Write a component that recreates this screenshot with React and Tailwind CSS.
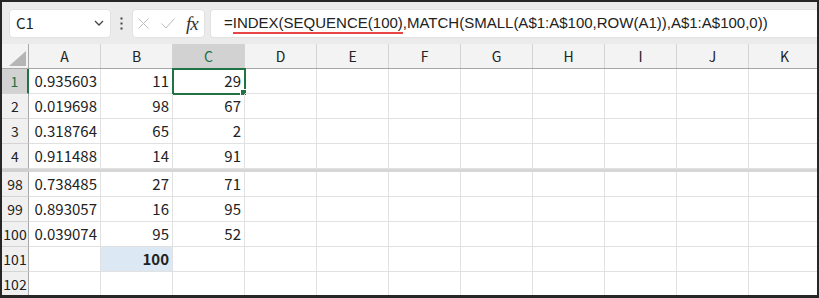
import React from 'react';

const COLS = ['A', 'B', 'C', 'D', 'E', 'F', 'G', 'H', 'I', 'J', 'K'];

const TOP_ROWS = [
  { n: 1, cells: ['0.935603', '11', '29'] },
  { n: 2, cells: ['0.019698', '98', '67'] },
  { n: 3, cells: ['0.318764', '65', '2'] },
  { n: 4, cells: ['0.911488', '14', '91'] },
];

const BOTTOM_ROWS = [
  { n: 98, cells: ['0.738485', '27', '71'] },
  { n: 99, cells: ['0.893057', '16', '95'] },
  { n: 100, cells: ['0.039074', '95', '52'] },
  { n: 101, cells: ['', '100', ''] },
  { n: 102, cells: ['', '', ''] },
];

const font = "font-['Noto_Sans_CJK_JP','Noto_Sans',sans-serif]";

const Toolbar = () => (
  <div className="flex items-center h-[42px] bg-[#ebebeb] pl-[7px] shrink-0">
    <div className="flex items-center justify-between w-[102px] h-[29px] bg-white rounded-[4px] border border-[#e2e2e2] pl-[6px] pr-[6px]">
      <span className="text-[15px] text-[#222]">C1</span>
      <svg width="10" height="6" viewBox="0 0 10 6">
        <path d="M1 1 L5 5 L9 1" fill="none" stroke="#444" strokeWidth="1.3" />
      </svg>
    </div>
    <div className="w-[21px] flex justify-center">
      <svg width="3" height="13" viewBox="0 0 3 13">
        <rect x="0.5" y="0.5" width="2" height="2" fill="#444" />
        <rect x="0.5" y="5.5" width="2" height="2" fill="#444" />
        <rect x="0.5" y="10.5" width="2" height="2" fill="#444" />
      </svg>
    </div>
    <div className="flex items-center w-[73px] h-[29px] bg-white rounded-[4px] border border-[#e2e2e2] pl-[5px]">
      <svg width="11" height="11" viewBox="0 0 11 11">
        <path d="M0.5 0.5 L10.5 10.5 M10.5 0.5 L0.5 10.5" stroke="#bdbdbd" strokeWidth="1" fill="none" />
      </svg>
      <svg width="14" height="11" viewBox="0 0 14 11" className="ml-[12px]">
        <path d="M0.5 5.5 L5 10 L13.5 0.5" stroke="#bdbdbd" strokeWidth="1" fill="none" />
      </svg>
      <span className="ml-[11px] text-[19px] italic font-['Liberation_Serif',serif] text-[#333] leading-none tracking-[-1px]">
        fx
      </span>
    </div>
    <div className="flex items-center flex-1 h-[29px] ml-[5px] bg-white rounded-l-[4px] border border-r-0 border-[#e2e2e2] pl-[13px] whitespace-nowrap">
      <span className="relative text-[15px] text-[#222] font-['Liberation_Sans',sans-serif]">
        =
        <span className="relative">
          INDEX(SEQUENCE(100)
          <span className="absolute left-0 right-0 bottom-[-3px] h-[2px] bg-[#e84545]" />
        </span>
        ,MATCH(SMALL(A$1:A$100,ROW(A1)),A$1:A$100,0))
      </span>
    </div>
  </div>
);

const HeaderRow = () => (
  <div className="grid grid-cols-[27px_repeat(11,72px)] h-[25px] bg-[#f3f3f3] border-b border-[#a8a8a8] shrink-0">
    <div className="relative border-r border-[#a8a8a8]">
      <svg width="17" height="15" viewBox="0 0 17 15" className="absolute right-[2px] bottom-[2px]">
        <path d="M17 0 L17 15 L0 15 Z" fill="#b5b5b5" />
      </svg>
    </div>
    {COLS.map((c) => (
      <div
        key={c}
        className={`flex items-center justify-center text-[14px] border-r border-[#d4d4d4] ${
          c === 'C' ? 'bg-[#d2d2d2] text-[#1e6e42]' : 'text-[#222]'
        }`}
      >
        {c}
      </div>
    ))}
  </div>
);

const Row = ({ n, cells }) => (
  <div className="grid grid-cols-[27px_repeat(11,72px)] h-[25px] shrink-0">
    <div
      className={`flex items-center justify-center text-[14px] border-b ${
        n === 1
          ? 'bg-[#d2d2d2] text-[#1e6e42] border-r-2 border-r-[#217346] border-b-[#d4d4d4]'
          : 'bg-[#f0f0f0] text-[#222] border-r border-r-[#a8a8a8] border-b-[#d4d4d4]'
      }`}
    >
      {n}
    </div>
    {COLS.map((c, i) => {
      const v = cells[i] || '';
      const isSel = n === 1 && c === 'C';
      const isSum = n === 101 && c === 'B';
      return (
        <div
          key={c}
          className={`relative flex items-center justify-end pr-[3px] text-[15px] text-[#222] border-r border-b border-[#e1e1e1] ${
            isSum ? 'bg-[#dce8f4] font-bold' : ''
          }`}
        >
          {v}
          {isSel && (
            <>
              <div className="absolute -left-[1px] -top-[1px] w-[74px] h-[27px] border-2 border-[#217346]" />
              <div className="absolute -right-[3px] -bottom-[3px] w-[7px] h-[7px] bg-[#217346] border border-white" />
            </>
          )}
        </div>
      );
    })}
  </div>
);

const Separator = () => (
  <div className="grid grid-cols-[27px_1fr] h-[3px] shrink-0">
    <div className="bg-[#cfcfcf]" />
    <div className="bg-[#d6d6d6]" />
  </div>
);

export default function App() {
  return (
    <div className={`w-[819px] h-[298px] bg-[#262626] pt-[2px] pl-[2px] pr-[2px] pb-[3px] ${font}`}>
      <div className="w-full h-full bg-white overflow-hidden flex flex-col">
        <Toolbar />
        <HeaderRow />
        {TOP_ROWS.map((r) => (
          <Row key={r.n} {...r} />
        ))}
        <Separator />
        {BOTTOM_ROWS.map((r) => (
          <Row key={r.n} {...r} />
        ))}
      </div>
    </div>
  );
}
